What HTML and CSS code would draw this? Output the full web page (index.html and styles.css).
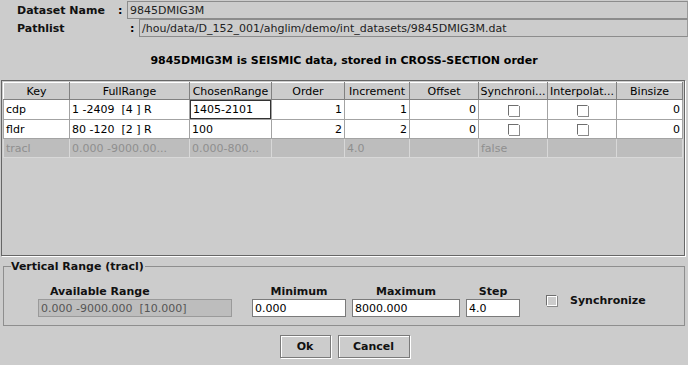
FILE: index.html
```html
<!DOCTYPE html>
<html lang="en">
<head>
    <meta charset="UTF-8">
    <title>Key Selection</title>
    <link rel="stylesheet" href="styles.css">
</head>
<body>
    <div class="dialog">
        <div class="info-row">
            <span class="info-label name-label">Dataset Name</span>
            <span class="colon">:</span>
            <div class="info-field">9845DMIG3M</div>
        </div>
        <div class="info-row">
            <span class="info-label path-label">Pathlist</span>
            <span class="colon">:</span>
            <div class="info-field">/hou/data/D_152_001/ahglim/demo/int_datasets/9845DMIG3M.dat</div>
        </div>

        <div class="title">9845DMIG3M is SEISMIC data, stored in CROSS-SECTION order</div>

        <!-- Key table -->
        <div class="table-pane">
            <table class="keys">
                <colgroup>
                    <col class="c-key"><col class="c-full"><col class="c-chosen"><col class="c-order"><col class="c-inc">
                    <col class="c-off"><col class="c-sync"><col class="c-interp"><col class="c-bin">
                </colgroup>
                <thead>
                    <tr>
                        <th>Key</th>
                        <th>FullRange</th>
                        <th>ChosenRange</th>
                        <th>Order</th>
                        <th>Increment</th>
                        <th>Offset</th>
                        <th>Synchroni...</th>
                        <th>Interpolat...</th>
                        <th>Binsize</th>
                    </tr>
                </thead>
                <tbody>
                    <tr>
                        <td>cdp</td>
                        <td class="pre">1 -2409  [4 ] R</td>
                        <td class="editing"><div class="editor">1405-2101</div></td>
                        <td class="num">1</td>
                        <td class="num">1</td>
                        <td class="num">0</td>
                        <td class="check"><span class="box"></span></td>
                        <td class="check"><span class="box"></span></td>
                        <td class="num">0</td>
                    </tr>
                    <tr>
                        <td>fldr</td>
                        <td class="pre">80 -120  [2 ] R</td>
                        <td>100</td>
                        <td class="num">2</td>
                        <td class="num">2</td>
                        <td class="num">0</td>
                        <td class="check"><span class="box"></span></td>
                        <td class="check"><span class="box"></span></td>
                        <td class="num">0</td>
                    </tr>
                    <tr class="disabled">
                        <td>tracl</td>
                        <td>0.000 -9000.00...</td>
                        <td>0.000-800...</td>
                        <td></td>
                        <td>4.0</td>
                        <td></td>
                        <td>false</td>
                        <td></td>
                        <td></td>
                    </tr>
                </tbody>
            </table>
        </div>

        <!-- Vertical range -->
        <fieldset class="range">
            <legend>Vertical Range (tracl)</legend>
            <div class="range-col col-avail">
                <span class="range-label">Available Range</span>
                <div class="field field-off">0.000 -9000.000  [10.000]</div>
            </div>
            <div class="range-col col-min">
                <span class="range-label">Minimum</span>
                <div class="field">0.000</div>
            </div>
            <div class="range-col col-max">
                <span class="range-label">Maximum</span>
                <div class="field">8000.000</div>
            </div>
            <div class="range-col col-step">
                <span class="range-label">Step</span>
                <div class="field">4.0</div>
            </div>
            <div class="sync">
                <span class="box"></span>
                <span class="sync-label">Synchronize</span>
            </div>
        </fieldset>

        <div class="buttons">
            <button class="btn btn-ok">Ok</button>
            <button class="btn btn-cancel">Cancel</button>
        </div>
    </div>
</body>
</html>
```

FILE: styles.css
```css
body {
    margin: 0;
    padding: 0;
    background-color: #cccccc;
    font-family: "DejaVu Sans", Verdana, sans-serif;
    font-size: 11px;
    color: #000;
}
.dialog {
    width: 688px;
    height: 365px;
    overflow: hidden;
    padding-top: 1px;
    box-sizing: border-box;
}

/* header info */
.info-row {
    display: flex;
    align-items: center;
    height: 18px;
}
.info-label {
    font-weight: bold;
    color: #111;
    padding-left: 17px;
    box-sizing: border-box;
}
.name-label {
    width: 118px;
}
.path-label {
    width: 130px;
}
.colon {
    font-weight: bold;
    width: 9px;
}
.info-field {
    flex: 1;
    height: 18px;
    line-height: 17px;
    border: 1px solid #8c8c8c;
    border-right-color: #999;
    box-sizing: border-box;
    padding-left: 2px;
    color: #222;
    white-space: nowrap;
    overflow: hidden;
}

.title {
    text-align: center;
    font-weight: bold;
    font-size: 11px;
    margin-top: 16px;
    height: 16px;
    line-height: 16px;
}

/* table */
.table-pane {
    margin: 11px 3px 0 1px;
    height: 176px;
    border: 1px solid #666;
    box-shadow: 1px 1px 0 #fff;
    padding: 1px;
    box-sizing: border-box;
}
.keys {
    border-collapse: collapse;
    table-layout: fixed;
    width: 679px;
}
.c-key { width: 66px; }
.c-full { width: 120px; }
.c-chosen { width: 82px; }
.c-order { width: 73px; }
.c-inc { width: 65px; }
.c-off { width: 69px; }
.c-sync { width: 69px; }
.c-interp { width: 69px; }
.c-bin { width: 66px; }

.keys th {
    font-weight: normal;
    height: 17px;
    padding: 0;
    background-color: #cccccc;
    border-top: 1px solid #fff;
    border-left: 1px solid #fff;
    border-right: 1px solid #808080;
    border-bottom: 1px solid #808080;
    box-sizing: border-box;
    white-space: nowrap;
    overflow: hidden;
}
.keys td {
    height: 19px;
    padding: 0 2px;
    background-color: #fff;
    border: 1px solid #a3a3a3;
    box-sizing: border-box;
    white-space: nowrap;
    overflow: hidden;
}
.keys td.pre {
    white-space: pre;
}
.keys td.num {
    text-align: right;
}
.keys td.check {
    text-align: center;
}
.keys td.editing {
    padding: 0;
}
.editor {
    height: 19px;
    line-height: 17px;
    border: 1px solid #333;
    box-sizing: border-box;
    padding-left: 2px;
}
.keys tr.disabled td {
    background-color: #bdbdbd;
    color: #8f8f8f;
    border-color: #d8d8d8;
}
.box {
    display: inline-block;
    width: 11px;
    height: 11px;
    border: 1px solid #6e6e6e;
    border-right-color: #fff;
    border-bottom-color: #fff;
    box-shadow: inset 1px 1px 0 #fff, 1px 1px 0 #8a8a8a;
    box-sizing: border-box;
    vertical-align: middle;
}

/* vertical range group */
.range {
    margin: 4px 3px 0 3px;
    padding: 4px 0 8px 34px;
    border: 1px solid #8e8e8e;
    height: 66px;
    box-sizing: border-box;
    display: flex;
    align-items: flex-end;
}
.range legend {
    font-weight: bold;
    padding: 0 1px 0 0;
    margin-left: -27px;
    font-size: 11px;
    color: #111;
}
.range-col {
    display: flex;
    flex-direction: column;
    align-items: center;
}
.range-label {
    font-weight: bold;
    height: 15px;
    line-height: 15px;
    color: #111;
}
.col-avail {
    width: 194px;
    align-items: flex-start;
}
.col-avail .range-label {
    padding-left: 12px;
}
.col-min {
    width: 94px;
    margin-left: 20px;
}
.col-max {
    width: 108px;
    margin-left: 6px;
}
.col-step {
    width: 54px;
    margin-left: 6px;
}
.field {
    width: 100%;
    height: 18px;
    line-height: 17px;
    background-color: #fff;
    border: 1px solid #7a7a7a;
    box-sizing: border-box;
    padding-left: 2px;
    white-space: pre;
    overflow: hidden;
}
.field-off {
    background-color: #bdbdbd;
    color: #555;
    border-color: #9a9a9a;
}
.sync {
    display: flex;
    align-items: center;
    margin-left: 26px;
    margin-bottom: 10px;
}
.sync-label {
    font-weight: bold;
    margin-left: 13px;
    color: #111;
}

/* buttons */
.buttons {
    display: flex;
    justify-content: center;
    gap: 7px;
    margin-top: 9px;
}
.btn {
    font-family: inherit;
    font-size: 11px;
    font-weight: bold;
    color: #111;
    height: 23px;
    background-color: #cccccc;
    border: 1px solid #7a7a7a;
    box-shadow: inset 1px 1px 0 #fff, 1px 1px 0 #fff;
    padding: 0;
}
.btn-ok {
    width: 51px;
    margin-left: 1px;
}
.btn-cancel {
    width: 72px;
}
```
